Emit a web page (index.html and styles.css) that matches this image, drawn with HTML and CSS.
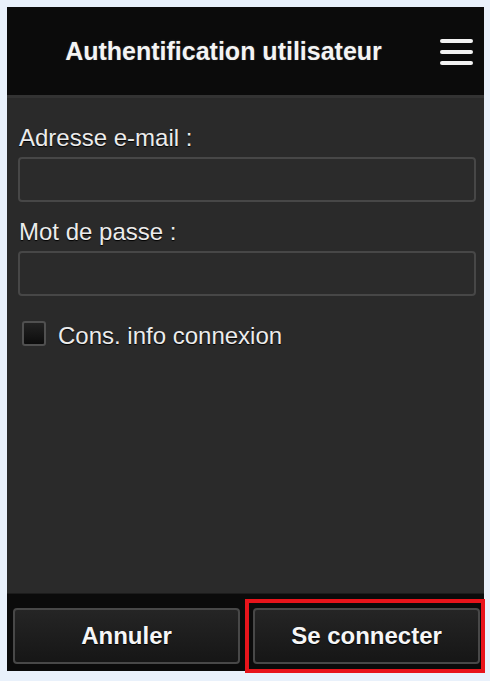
FILE: index.html
```html
<!DOCTYPE html>
<html lang="fr">
<head>
<meta charset="utf-8">
<title>Authentification utilisateur</title>
<link rel="stylesheet" href="styles.css">
</head>
<body>
<div class="app">
  <header class="header">
    <h1 class="title">Authentification utilisateur</h1>
    <button class="menu" aria-label="Menu">
      <svg width="33" height="28" viewBox="0 0 33 28">
        <rect x="0" y="1" width="33" height="4" rx="2" fill="#f2f2f2"/>
        <rect x="0" y="12" width="33" height="4" rx="2" fill="#f2f2f2"/>
        <rect x="0" y="23" width="33" height="4" rx="2" fill="#f2f2f2"/>
      </svg>
    </button>
  </header>
  <main class="content">
    <label class="label">Adresse e-mail :</label>
    <div class="field"></div>
    <label class="label">Mot de passe :</label>
    <div class="field"></div>
    <div class="check-row">
      <span class="checkbox"></span>
      <span class="check-text">Cons. info connexion</span>
    </div>
  </main>
  <footer class="footer">
    <div class="btn-wrap"><button class="btn">Annuler</button></div>
    <div class="btn-wrap highlighted"><button class="btn">Se connecter</button><span class="red-box"></span></div>
  </footer>
</div>
</body>
</html>
```
FILE: styles.css
```css
html, body {
  margin: 0;
  padding: 0;
}
body {
  background: #e9f1fb;
  width: 490px;
  height: 681px;
  overflow: hidden;
  font-family: "Liberation Sans", Arial, sans-serif;
}
.app {
  margin: 7px 0 0 7px;
  width: 477px;
  height: 664px;
  display: flex;
  flex-direction: column;
  background: #2a2a2a;
}
.header {
  height: 88px;
  flex: none;
  background: #0b0b0b;
  display: flex;
  align-items: center;
  padding: 0 11px 0 0;
  border-bottom: 3px solid #333333;
}
.title {
  flex: 1;
  margin: 0;
  text-align: center;
  color: #f4f4f4;
  font-size: 25px;
  font-weight: bold;
  text-shadow: 0 0 2px rgba(255,255,255,0.25), 0 1px 1px #000;
}
.menu {
  width: 33px;
  height: 28px;
  padding: 0;
  border: 0;
  background: none;
  display: block;
  margin-top: 2px;
}
.menu svg { display: block; }
.content {
  flex: 1;
  padding: 26px 8px 0 11px;
  display: flex;
  flex-direction: column;
  background: #2a2a2a;
}
.label {
  display: block;
  color: #ececec;
  font-size: 24px;
  line-height: 28px;
  padding-left: 1px;
  margin-bottom: 5px;
  text-shadow: 0 1px 1px #000;
}
.field {
  height: 41px;
  border: 2px solid #474747;
  border-radius: 4px;
  background: #2b2b2b;
  margin-bottom: 16px;
}
.check-row {
  display: flex;
  align-items: center;
  gap: 12px;
  margin-top: 8px;
  padding-left: 4px;
}
.checkbox {
  width: 20px;
  height: 21px;
  margin-top: -3px;
  border: 2px solid #505050;
  border-radius: 3px;
  background: linear-gradient(#232323, #0c0c0c);
}
.check-text {
  color: #ececec;
  font-size: 24px;
  line-height: 28px;
  margin-top: 2px;
  text-shadow: 0 1px 1px #000;
}
.footer {
  height: 78px;
  flex: none;
  background: #0b0b0b;
  border-top: 1px solid #1c1c1c;
  box-sizing: border-box;
  display: flex;
  gap: 13px;
  padding: 14px 4px 0 6px;
}
.btn-wrap {
  position: relative;
  width: 227px;
  height: 56px;
}
.btn {
  width: 100%;
  height: 100%;
  border: 2px solid #484848;
  border-radius: 4px;
  background: linear-gradient(#252525, #161616);
  color: #f6f6f6;
  font-family: "Liberation Sans", Arial, sans-serif;
  font-size: 24px;
  font-weight: bold;
  text-shadow: 0 1px 1px #000;
  padding: 0;
}
.red-box {
  position: absolute;
  top: -9px;
  left: -8px;
  right: -5px;
  bottom: -9px;
  border: 4px solid #e8141b;
  pointer-events: none;
}
```
